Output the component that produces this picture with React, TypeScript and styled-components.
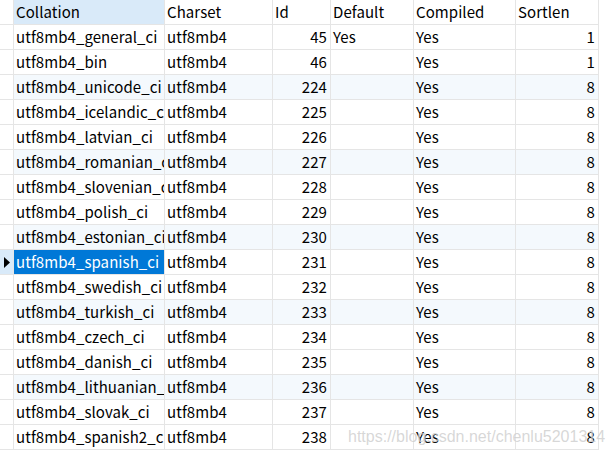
import React from "react";
import styled, { createGlobalStyle } from "styled-components";

const Global = createGlobalStyle`
  html, body { margin: 0; padding: 0; background: #ffffff; }
  body { font-family: "Noto Sans CJK SC", "Noto Sans", sans-serif; }
`;

const COLS = "14px 151px 108px 58px 83px 102px 83px";

const Page = styled.div`
  position: relative;
  width: 613px;
  height: 465px;
  overflow: hidden;
  background: #ffffff;
`;

const Grid = styled.div`
  display: flex;
  flex-direction: column;
  width: 599px;
`;

const Row = styled.div`
  display: grid;
  grid-template-columns: ${COLS};
  height: 25px;
`;

const HeadCell = styled.div<{ $active?: boolean }>`
  box-sizing: border-box;
  height: 25px;
  border-right: 1px solid #e5e5e5;
  border-bottom: 1px solid #e5e5e5;
  background: ${(p) => (p.$active ? "#d9eaf9" : "#ffffff")};
  color: #000000;
  font-size: 15px;
  letter-spacing: 0.07px;
  line-height: 24px;
  padding: 0 2px;
  white-space: nowrap;
  overflow: hidden;
`;

const Indicator = styled.div<{ $current?: boolean }>`
  box-sizing: border-box;
  height: 25px;
  border-right: 1px solid #e5e5e5;
  border-bottom: 1px solid #e5e5e5;
  background: ${(p) => (p.$current ? "#d9eaf9" : "#ffffff")};
  display: flex;
  align-items: center;
  justify-content: center;
`;

const Cell = styled.div<{ $right?: boolean; $selected?: boolean; $alt?: boolean }>`
  box-sizing: border-box;
  height: 25px;
  border-right: 1px solid #e5e5e5;
  border-bottom: 1px solid #e5e5e5;
  background: ${(p) => (p.$selected ? "#0078d7" : p.$alt ? "#f4f9fd" : "#ffffff")};
  color: ${(p) => (p.$selected ? "#ffffff" : "#000000")};
  font-size: 15px;
  letter-spacing: 0.07px;
  line-height: 24px;
  padding: ${(p) => (p.$right ? "0 3px 0 2px" : "0 2px")};
  text-align: ${(p) => (p.$right ? "right" : "left")};
  white-space: nowrap;
  overflow: hidden;
  text-overflow: clip;
`;

const Watermark = styled.div`
  position: absolute;
  left: 348px;
  top: 428px;
  font-family: "Liberation Sans", Arial, sans-serif;
  font-size: 16px;
  color: rgba(175, 175, 175, 0.5);
  text-shadow: 0 0 1px rgba(255, 255, 255, 0.8);
  white-space: nowrap;
`;

type R = { c: string; id: number; def?: string; s: number };

const rows: R[] = [
  { c: "utf8mb4_general_ci", id: 45, def: "Yes", s: 1 },
  { c: "utf8mb4_bin", id: 46, s: 1 },
  { c: "utf8mb4_unicode_ci", id: 224, s: 8 },
  { c: "utf8mb4_icelandic_ci", id: 225, s: 8 },
  { c: "utf8mb4_latvian_ci", id: 226, s: 8 },
  { c: "utf8mb4_romanian_ci", id: 227, s: 8 },
  { c: "utf8mb4_slovenian_ci", id: 228, s: 8 },
  { c: "utf8mb4_polish_ci", id: 229, s: 8 },
  { c: "utf8mb4_estonian_ci", id: 230, s: 8 },
  { c: "utf8mb4_spanish_ci", id: 231, s: 8 },
  { c: "utf8mb4_swedish_ci", id: 232, s: 8 },
  { c: "utf8mb4_turkish_ci", id: 233, s: 8 },
  { c: "utf8mb4_czech_ci", id: 234, s: 8 },
  { c: "utf8mb4_danish_ci", id: 235, s: 8 },
  { c: "utf8mb4_lithuanian_ci", id: 236, s: 8 },
  { c: "utf8mb4_slovak_ci", id: 237, s: 8 },
  { c: "utf8mb4_spanish2_ci", id: 238, s: 8 },
];

const CURRENT = 9;

export default function App() {
  return (
    <Page>
      <Global />
      <Grid>
        <Row>
          <Indicator />
          <HeadCell $active>Collation</HeadCell>
          <HeadCell>Charset</HeadCell>
          <HeadCell>Id</HeadCell>
          <HeadCell>Default</HeadCell>
          <HeadCell>Compiled</HeadCell>
          <HeadCell>Sortlen</HeadCell>
        </Row>
        {rows.map((r, i) => {
          const alt = (i + 1) % 3 === 0;
          const cur = i === CURRENT;
          return (
            <Row key={r.c}>
              <Indicator $current={cur}>
                {cur && (
                  <svg width="6" height="11" viewBox="0 0 6 11">
                    <path d="M0 0 L6 5.5 L0 11 Z" fill="#000" />
                  </svg>
                )}
              </Indicator>
              <Cell $alt={alt} $selected={cur}>{r.c}</Cell>
              <Cell $alt={alt}>utf8mb4</Cell>
              <Cell $alt={alt} $right>{r.id}</Cell>
              <Cell $alt={alt}>{r.def ?? ""}</Cell>
              <Cell $alt={alt}>Yes</Cell>
              <Cell $alt={alt} $right>{r.s}</Cell>
            </Row>
          );
        })}
      </Grid>
      <Watermark>https://blog.csdn.net/chenlu5201314</Watermark>
    </Page>
  );
}
